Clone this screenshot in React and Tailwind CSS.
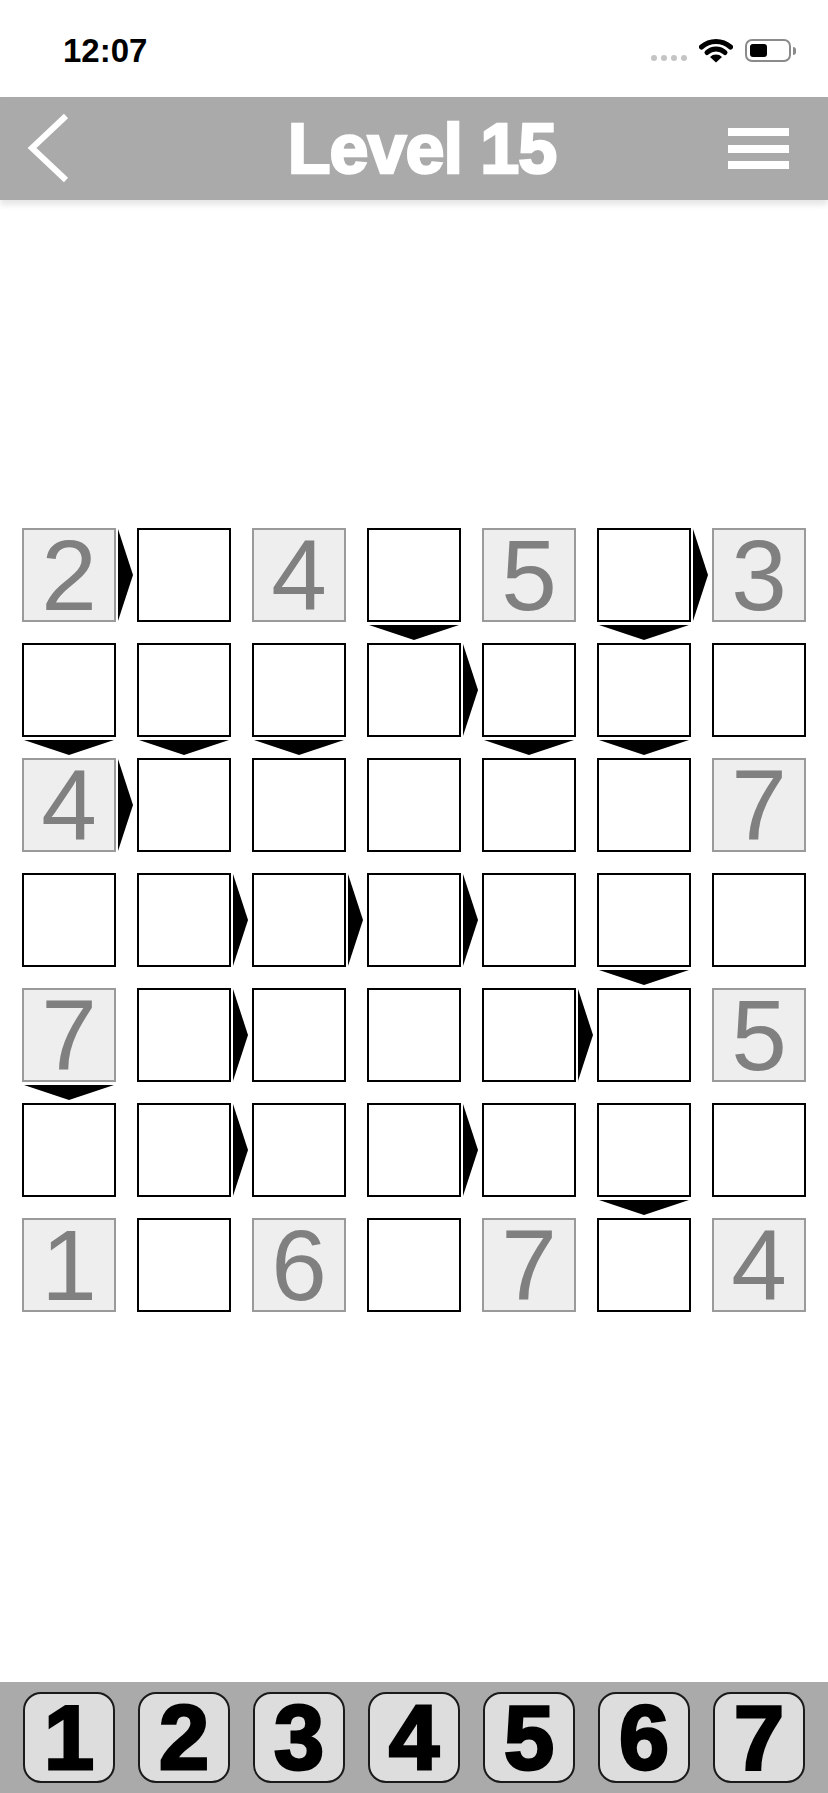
import React from "react";

// clue cells, keyed "row-col"
const givens = {
    "0-0": 2, "0-2": 4, "0-4": 5, "0-6": 3,
    "2-0": 4, "2-6": 7,
    "4-0": 7, "4-6": 5,
    "6-0": 1, "6-2": 6, "6-4": 7, "6-6": 4,
};

// inequality arrows: right of the cell / below the cell
const rightArrows = ["0-0", "0-5", "1-3", "2-0", "3-1", "3-2", "3-3", "4-1", "4-4", "5-1", "5-3"];
const downArrows = ["0-3", "0-5", "1-0", "1-1", "1-2", "1-4", "1-5", "3-5", "4-0", "5-5"];

const font = { fontFamily: '"Liberation Sans", Arial, sans-serif' };

const StatusBar = () => (
    <div className="h-[97px] flex items-start justify-between pl-[63px] pr-[32px] pt-[34px]">
        <span className="text-[33px] leading-none font-semibold text-black" style={font}>12:07</span>
        <div className="flex items-center mt-[4px]">
            <div className="flex gap-[4px] mt-[14px] mr-[12px]">
                {[0, 1, 2, 3].map(i => (
                    <span key={i} className="w-[6px] h-[6px] rounded-full bg-[#c4c4c4]" />
                ))}
            </div>
            <svg width="34" height="25" viewBox="0 0 34 25" className="mr-[12px]">
                <path d="M2.5 9 A22 22 0 0 1 31.5 9" fill="none" stroke="#000" strokeWidth="5" strokeLinecap="round" />
                <path d="M8 14.5 A13 13 0 0 1 26 14.5" fill="none" stroke="#000" strokeWidth="5" strokeLinecap="round" />
                <path d="M17 24.5 L11 19 A8.5 8.5 0 0 1 23 19 Z" fill="#000" />
            </svg>
            <div className="flex items-center">
                <div className="w-[46px] h-[23px] rounded-[7px] border-2 border-[#8a8a8a] p-[3px]">
                    <div className="w-[17px] h-full rounded-[3px] bg-black" />
                </div>
                <div className="w-[3px] h-[8px] rounded-r-full bg-[#8a8a8a] ml-[2px]" />
            </div>
        </div>
    </div>
);

const Header = () => (
    <div className="h-[103px] bg-[#aaaaaa] flex items-center shadow-[0_5px_6px_rgba(0,0,0,0.10)] relative z-10">
        <div className="w-[100px] h-full flex items-center pl-[26px]">
            <svg width="44" height="72" viewBox="0 0 44 72">
                <polyline points="40,3 6,35 40,67" fill="none" stroke="#fff" strokeWidth="6" />
            </svg>
        </div>
        <div
            className="flex-1 text-center pl-4 text-white text-[70px] font-bold leading-none tracking-[-1px] [-webkit-text-stroke:2.5px_white]"
            style={font}
        >
            Level 15
        </div>
        <div className="w-[100px] h-full flex flex-col justify-center gap-[8.5px]">
            <span className="block w-[61px] h-[8px] bg-white" />
            <span className="block w-[61px] h-[8px] bg-white" />
            <span className="block w-[61px] h-[8px] bg-white" />
        </div>
    </div>
);

const Cell = ({ r, c }) => {
    const key = `${r}-${c}`;
    const value = givens[key];

    return (
        <div className="relative w-[94px] h-[94px]">
            {value ? (
                <div className="w-full h-full bg-[#eeeeee] border-2 border-[#9a9a9a] flex items-center justify-center">
                    <span className="text-[100px] leading-none text-[#808080]" style={font}>{value}</span>
                </div>
            ) : (
                <div className="w-full h-full bg-white border-2 border-black" />
            )}

            {rightArrows.includes(key) && (
                <svg className="absolute left-[96px] top-[1px]" width="15" height="92" viewBox="0 0 15 92" preserveAspectRatio="none">
                    <polygon points="0,0 15,46 0,92" fill="#000" />
                </svg>
            )}
            {downArrows.includes(key) && (
                <svg className="absolute top-[97px] left-[2px]" width="90" height="15" viewBox="0 0 90 15" preserveAspectRatio="none">
                    <polygon points="0,0 90,0 45,15" fill="#000" />
                </svg>
            )}
        </div>
    );
};

const Board = () => (
    <div className="grid grid-cols-[repeat(7,94px)] gap-x-[21px] gap-y-[21px] px-[22px]">
        {Array.from({ length: 7 }).map((_, r) =>
            Array.from({ length: 7 }).map((_, c) => <Cell key={`${r}-${c}`} r={r} c={c} />)
        )}
    </div>
);

const NumberPad = () => (
    <div className="h-[111px] bg-[#aaaaaa] pt-[10px] px-[23px]">
        <div className="flex gap-[23px]">
            {[1, 2, 3, 4, 5, 6, 7].map(n => (
                <div
                    key={n}
                    className="w-[92px] h-[91px] rounded-[18px] border-2 border-[#1a1a1a] bg-[#dddddd] flex items-center justify-center"
                >
                    <span
                        className="text-[90px] leading-none font-bold text-black [-webkit-text-stroke:3px_black]"
                        style={font}
                    >
                        {n}
                    </span>
                </div>
            ))}
        </div>
    </div>
);

export default function App() {
    return (
        <div className="h-[1793px] w-[828px] bg-white flex flex-col overflow-hidden">
            <StatusBar />
            <Header />
            <div className="flex-1 pt-[328px]">
                <Board />
            </div>
            <NumberPad />
        </div>
    );
}
